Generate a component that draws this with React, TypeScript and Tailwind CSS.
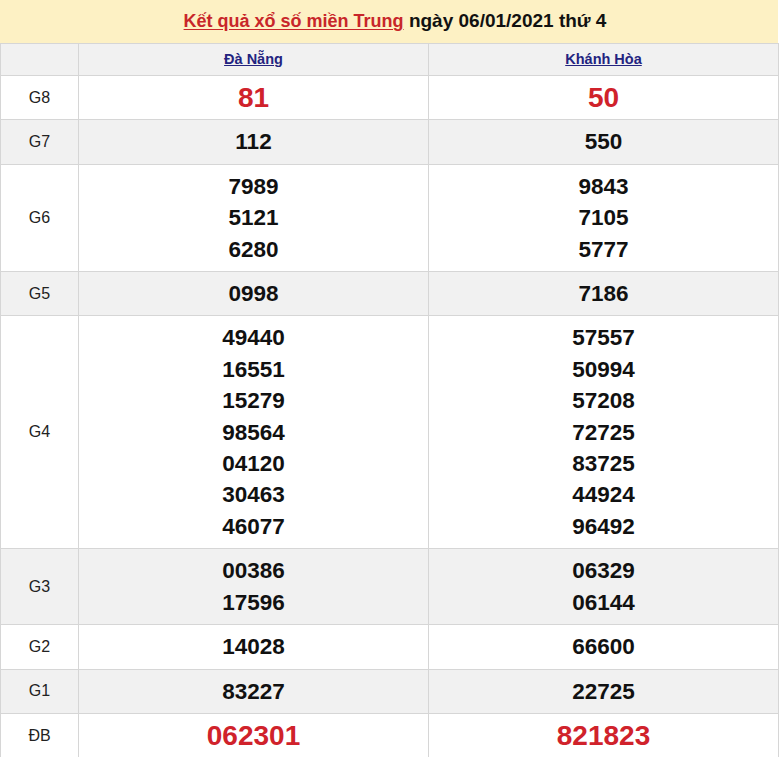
import React from "react";

type Row = { label: string; a: string[]; b: string[]; big?: boolean };

const rows: Row[] = [
  { label: "G8", a: ["81"], b: ["50"], big: true },
  { label: "G7", a: ["112"], b: ["550"] },
  { label: "G6", a: ["7989", "5121", "6280"], b: ["9843", "7105", "5777"] },
  { label: "G5", a: ["0998"], b: ["7186"] },
  {
    label: "G4",
    a: ["49440", "16551", "15279", "98564", "04120", "30463", "46077"],
    b: ["57557", "50994", "57208", "72725", "83725", "44924", "96492"],
  },
  { label: "G3", a: ["00386", "17596"], b: ["06329", "06144"] },
  { label: "G2", a: ["14028"], b: ["66600"] },
  { label: "G1", a: ["83227"], b: ["22725"] },
  { label: "ĐB", a: ["062301"], b: ["821823"], big: true },
];

function Nums({ list, big }: { list: string[]; big?: boolean }) {
  return (
    <td className="border border-[#d6d6d6] py-[6px] text-center align-middle">
      {list.map((n, i) => (
        <div
          key={i}
          className={
            big
              ? "leading-[31.4px] text-[28px] font-bold text-[#d0222b]"
              : "leading-[31.4px] text-[22.5px] font-bold text-[#111111]"
          }
        >
          {n}
        </div>
      ))}
    </td>
  );
}

export default function App() {
  return (
    <div
      className="w-[780px] h-[757px] bg-white overflow-hidden"
      style={{ fontFamily: '"Liberation Sans", Arial, sans-serif' }}
    >
      <div className="w-[778px] h-[43px] bg-[#fdf1c4] flex items-center justify-center pl-[12px] font-bold text-[#111111]">
        <span className="text-[18px] text-[#c8262a] underline underline-offset-2">Kết quả xổ số miền Trung</span>
        <span className="text-[19px]">&nbsp;ngày 06/01/2021 thứ 4</span>
      </div>
      <table className="w-[778px] border-collapse table-fixed">
        <colgroup>
          <col className="w-[78px]" />
          <col className="w-[350px]" />
          <col className="w-[350px]" />
        </colgroup>
        <tbody>
          <tr className="bg-[#f1f1f1] h-[32px]">
            <td className="border border-[#d6d6d6]"></td>
            <td className="border border-[#d6d6d6] text-center text-[14.5px] font-bold text-[#23237f] underline">
              Đà Nẵng
            </td>
            <td className="border border-[#d6d6d6] text-center text-[14.5px] font-bold text-[#23237f] underline">
              Khánh Hòa
            </td>
          </tr>
          {rows.map((r, i) => (
            <tr key={r.label} className={i % 2 === 0 ? "bg-white" : "bg-[#f1f1f1]"}>
              <td className="border border-[#d6d6d6] text-center align-middle text-[16px] text-[#222222]">
                {r.label}
              </td>
              <Nums list={r.a} big={r.big} />
              <Nums list={r.b} big={r.big} />
            </tr>
          ))}
        </tbody>
      </table>
    </div>
  );
}
